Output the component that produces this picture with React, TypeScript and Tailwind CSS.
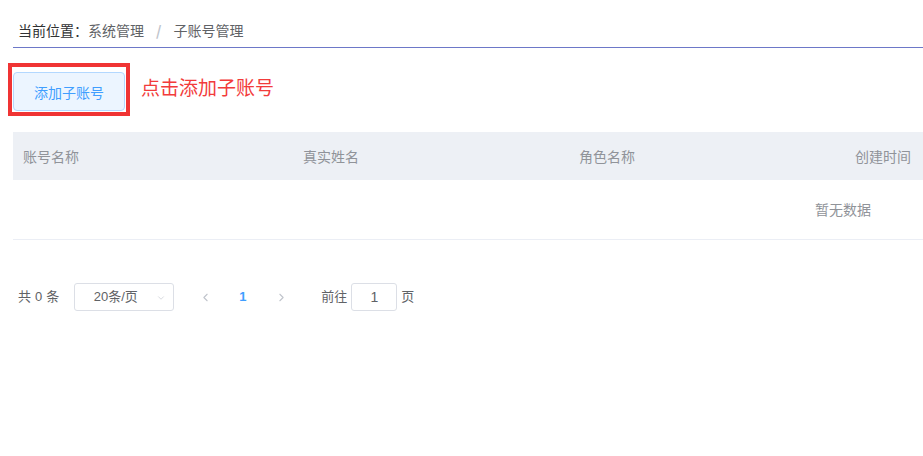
import React from "react";
import { ChevronLeft, ChevronRight, ChevronDown } from "lucide-react";

export default function App() {
  return (
    <div className="w-[923px] h-[456px] bg-white overflow-hidden font-['Noto_Sans_CJK_SC',_'Noto_Sans',_sans-serif]">
      {/* Breadcrumb */}
      <div className="ml-[13px] pl-[5px] pt-[21px] pb-[8px] border-b border-[#6d78c8] flex items-center text-[14px] leading-[18px]">
        <span className="text-[#303133]">当前位置：</span>
        <span className="text-[#606266]">系统管理</span>
        <span className="text-[#c0c4cc] mx-[12px] font-bold">/</span>
        <span className="text-[#606266]">子账号管理</span>
      </div>

      {/* Action row */}
      <div className="flex items-center mt-[15px] ml-[8px]">
        <div className="border-[4px] border-[#f03434] pt-[5px] pl-[1px] pr-[1px] pb-[1px]">
          <button className="w-[112px] h-[39px] rounded-[4px] border border-[#b3d8ff] bg-[#ecf5ff] text-[#409eff] text-[14px] leading-none">
            添加子账号
          </button>
        </div>
        <span className="ml-[11px] text-[19px] leading-[24px] text-[#f23b3b] -mt-[5px]">点击添加子账号</span>
      </div>

      {/* Table */}
      <div className="ml-[13px] mt-[16px] overflow-hidden text-[14px]">
        <div className="flex h-[48px] items-center bg-[#edf0f5] text-[#909399]">
          <div className="w-[82px] pl-[10px] shrink-0">账号名称</div>
          <div className="w-[276px] pr-[12px] text-right shrink-0">真实姓名</div>
          <div className="w-[276px] pr-[12px] text-right shrink-0">角色名称</div>
          <div className="w-[276px] pr-[12px] text-right shrink-0">创建时间</div>
        </div>
        <div className="h-[60px] border-b border-[#ebeef5]">
          <div className="w-[1660px] h-full flex items-center justify-center text-[#909399]">暂无数据</div>
        </div>
      </div>

      {/* Pagination */}
      <div className="flex items-center ml-[18px] mt-[43px] h-[28px] text-[13px] text-[#606266] font-['Liberation_Sans',_'Noto_Sans_CJK_SC',_sans-serif]">
        <span className="flex items-center">
          <span>共</span>
          <span className="ml-[4px]">0</span>
          <span className="ml-[4px]">条</span>
        </span>
        <div className="ml-[15px] w-[100px] h-[28px] border border-[#dcdfe6] rounded-[3px] relative flex items-center">
          <span className="w-full pl-[8px] pr-[25px] text-center">20条/页</span>
          <ChevronDown className="absolute right-[7px] top-[9px] text-[#c0c4cc]" size={10} strokeWidth={1.5} />
        </div>
        <div className="ml-[13px] w-[36px] flex justify-center text-[#c0c4cc]">
          <ChevronLeft size={13} strokeWidth={2} />
        </div>
        <div className="w-[39px] text-center text-[#409eff] font-bold">1</div>
        <div className="w-[39px] flex justify-center text-[#c0c4cc]">
          <ChevronRight size={13} strokeWidth={2} />
        </div>
        <span className="ml-[20px]">前往</span>
        <div className="ml-[4px] w-[46px] h-[28px] border border-[#dcdfe6] rounded-[3px] flex items-center justify-center text-[14px]">1</div>
        <span className="ml-[4px]">页</span>
      </div>
    </div>
  );
}
